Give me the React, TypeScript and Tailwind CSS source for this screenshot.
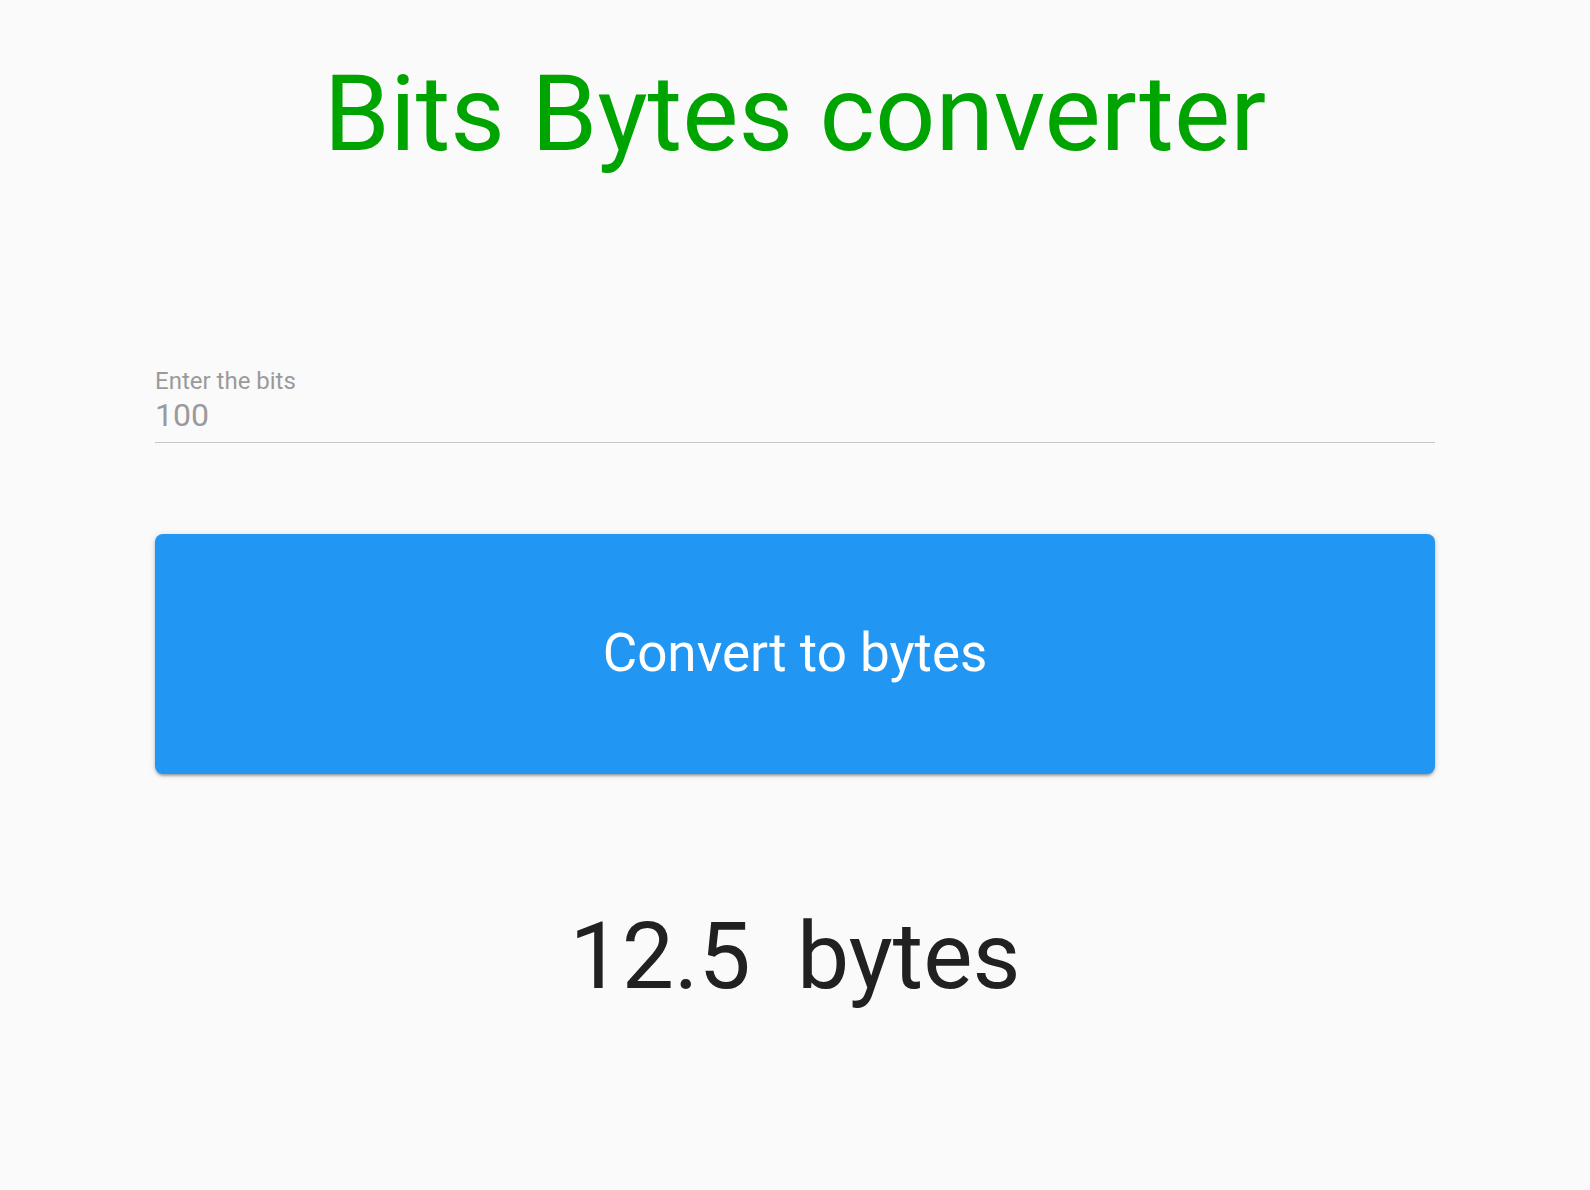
import React, { useState } from 'react';

export default function App() {
  const [bits, setBits] = useState('100');
  const [bytes, setBytes] = useState<number | null>(12.5);

  const convert = () => {
    const n = parseFloat(bits);
    setBytes(isNaN(n) ? null : n / 8);
  };

  return (
    <div className="min-h-[1190px] w-full bg-[#fafafa] px-[155px] font-['Roboto','Liberation_Sans',sans-serif]">
      <h1 className="pt-[52px] text-center text-[106px] leading-[124px] font-normal text-[#00a400]">Bits Bytes converter</h1>

      <div className="mt-[192px] border-b border-[#c6c6c6] pb-[8px]">
        <label className="block text-[24px] leading-[26px] text-[#9a9a9a]">Enter the bits</label>
        <input
          value={bits}
          onChange={e => setBits(e.target.value)}
          className="mt-[2px] block w-full bg-transparent text-[32px] leading-[38px] text-[#9a9a9a] outline-none"
        />
      </div>

      <button
        onClick={convert}
        className="mt-[91px] flex h-[240px] w-full items-center justify-center rounded-[8px] bg-[#2196f3] text-[53px] text-white shadow-[0_3px_3px_-2px_rgba(0,0,0,0.25),0_2px_3px_0_rgba(0,0,0,0.16),0_1px_6px_0_rgba(0,0,0,0.14)]"
      >
        Convert to bytes
      </button>

      <p className="mt-[128px] whitespace-pre text-center text-[93px] leading-[110px] text-[#212121]">
        {bytes !== null ? `${bytes}  bytes` : ''}
      </p>
    </div>
  );
}
